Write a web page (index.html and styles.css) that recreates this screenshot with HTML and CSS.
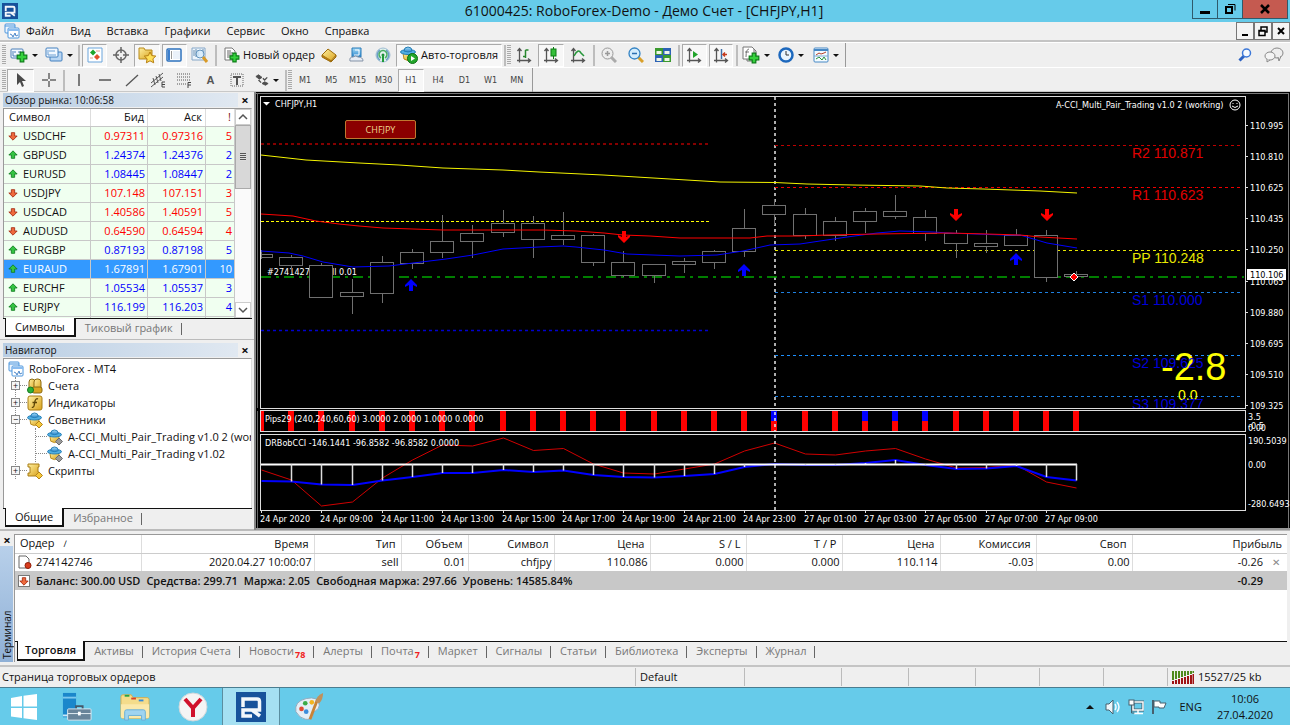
FILE: index.html
```html
<!DOCTYPE html>
<html lang="ru">
<head>
<meta charset="utf-8">
<title>61000425: RoboForex-Demo - Демо Счет - [CHFJPY,H1]</title>
<link rel="stylesheet" href="styles.css">
</head>
<body>
<svg class="defs" aria-hidden="true">
  <defs>
    <linearGradient id="gold" x1="0" y1="0" x2="1" y2="1"><stop offset="0" stop-color="#fff0a0"/><stop offset="1" stop-color="#d9a21c"/></linearGradient>
    <linearGradient id="sky" x1="0" y1="0" x2="0" y2="1"><stop offset="0" stop-color="#a5dcf8"/><stop offset="1" stop-color="#2a86cc"/></linearGradient>
  </defs>
  <symbol id="logo" viewBox="0 0 30 30"><rect width="30" height="30" fill="#17529b"/><path d="M7 15V7h14q2.500 0 2.500 2.500V18H7v6h9M16 18l8 6" fill="none" stroke="#f3f7fb" stroke-width="3.500"/></symbol>
  <symbol id="charts" viewBox="0 0 16 16"><rect x="1" y="1" width="10" height="9" rx="1" fill="#eef6ff" stroke="#4b95dc"/><path d="M1 3h10" stroke="#4b95dc"/><rect x="4" y="5" width="11" height="10" rx="1" fill="#fff" stroke="#4b95dc"/><path d="M4 7h11" stroke="#8abcf0" stroke-width="2"/><path d="M6 11l2 1 1 2 2-4 1 3 2-1" fill="none" stroke="#4b86c8"/></symbol>
  <symbol id="plus" viewBox="0 0 10 10"><path d="M3.500 1h3v2.500h2.500v3h-2.500v2.500h-3v-2.500h-2.500v-3h2.500z" fill="#35d23c" stroke="#0c7d17"/></symbol>
  <symbol id="newchart" viewBox="0 0 18 16"><rect x="1" y="2" width="12" height="9" rx="1" fill="#f2f8ff" stroke="#4a7fb8"/><path d="M3 4v5h8M4 5h2M8 5h3" fill="none" stroke="#4a7fb8"/><use href="#plus" x="6" y="4" width="12" height="12"/></symbol>
  <symbol id="windows" viewBox="0 0 18 16"><rect x="5" y="5" width="12" height="9" rx="1" fill="#b9d6f3" stroke="#4280bf"/><rect x="1" y="1" width="12" height="9" rx="1" fill="#f2f8ff" stroke="#4280bf"/><path d="M3 3v5h8M4 4h6" fill="none" stroke="#6a9fd4"/></symbol>
  <symbol id="watch" viewBox="0 0 16 16"><path d="M1 1h14v14H1z" fill="#fff" stroke="#6aa5dc"/><path d="M3 5.500l3-3 3 3-3 3z" fill="#1ea52c"/><path d="M7 10l3-3 3 3-3 3z" fill="#e2502b"/><path d="M9 4h4M3 11h3" stroke="#e3a08c"/></symbol>
  <symbol id="target" viewBox="0 0 16 16"><circle cx="8" cy="8" r="5" fill="none" stroke="#666" stroke-width="1.500"/><path d="M8 0v6M8 10v6M0 8h6M10 8h6" stroke="#666" stroke-width="1.500"/></symbol>
  <symbol id="folderstar" viewBox="0 0 18 18"><path d="M1 2h5l1 2h7v9H1z" fill="url(#gold)" stroke="#b88a1d"/><path d="M12 6l1.800 3.600 4 .5-2.900 2.700.8 4-3.700-2-3.600 2 .7-4-2.800-2.700 4-.5z" fill="#ffe05a" stroke="#b57d10"/></symbol>
  <symbol id="panel" viewBox="0 0 16 16"><rect x="1" y="2" width="14" height="12" rx="1" fill="#fff" stroke="#2d71bd" stroke-width="1.500"/><path d="M3 3v10" stroke="#3c7fce" stroke-width="2"/><path d="M5 5h1M5 7h1M5 9h1M5 11h1" stroke="#333"/><path d="M7 5h7M7 7h7M7 9h7M7 11h7" stroke="#d6e4f5"/></symbol>
  <symbol id="tester" viewBox="0 0 18 18"><path d="M1 2h13v12H1z" fill="#edf5fc" stroke="#86a7c8"/><path d="M3 4v6M5 3v8M7 5v5M12 3v5" stroke="#6b8fb0"/><circle cx="9" cy="8" r="4" fill="#d4ebfb" fill-opacity=".8" stroke="#6293bd"/><path d="M12 11l4 5" stroke="#d99b28" stroke-width="3"/></symbol>
  <symbol id="order" viewBox="0 0 16 16"><path d="M1 1h7l3 3v9H1z" fill="#fff" stroke="#777"/><path d="M3 4h4M3 6h6M3 8h5M3 10h3" stroke="#666"/><use href="#plus" x="5" y="5" width="11" height="11"/></symbol>
  <symbol id="gold-bar" viewBox="0 0 16 16"><path d="M1 8l6-6 8 6-5 6z" fill="url(#gold)" stroke="#9d6d0c"/><path d="M1 8v2l9 5v-2M10 15l5-5V8" fill="#b67d12" stroke="#9d6d0c"/></symbol>
  <symbol id="hat" viewBox="0 0 16 16"><path d="M4 1h9v9H4z" fill="url(#sky)" stroke="#287bb8"/><path d="M7 3h4v5H6" fill="none" stroke="#fff"/><path d="M2 14q-1-4 3-4 3-2 5 0 5 0 5 4z" fill="#e6ecf4" stroke="#8593a7"/></symbol>
  <symbol id="signal" viewBox="0 0 16 16"><circle cx="8" cy="8" r="7" fill="#e3f1ee" stroke="#a0bdd3"/><path d="M5 13a6 6 0 0 1 0-10M11 3a6 6 0 0 1 0 10" fill="none" stroke="#6b9fc5" stroke-width="1.500"/><path d="M6 11a4 4 0 1 1 4 0" fill="none" stroke="#49ae63" stroke-width="1.500"/><circle cx="8" cy="8" r="1.500" fill="#1f8a39"/><path d="M8 8v7" stroke="#1f9a39" stroke-width="2"/></symbol>
  <symbol id="advisor" viewBox="0 0 16 16"><path d="M3 7h10l-1 6q-4 3-8 0z" fill="url(#gold)" stroke="#b88a1d"/><ellipse cx="8" cy="6" rx="7.500" ry="2.500" fill="#50aee2" stroke="#247db4"/><path d="M4 5q0-4 4-4t4 4q-4 2-8 0" fill="url(#sky)" stroke="#247db4"/></symbol>
  <symbol id="advisor-play" viewBox="0 0 18 18"><use href="#advisor" width="16" height="16"/><circle cx="12.500" cy="12.500" r="5" fill="#22a62b" stroke="#0a7012"/><path d="M11 10l4 2.500-4 2.500z" fill="#fff"/></symbol>
  <symbol id="advisor-gold" viewBox="0 0 16 16"><use href="#advisor" width="15" height="15"/><path d="M12 9l3.500 3.500-3.500 3.500-3.500-3.500z" fill="#f5c83a" stroke="#b3831a"/></symbol>
  <symbol id="advisor-gray" viewBox="0 0 16 16"><use href="#advisor" width="15" height="15"/><path d="M12 9l3.500 3.500-3.500 3.500-3.500-3.500z" fill="#9a9a9a" stroke="#6c6c6c"/></symbol>
  <symbol id="axes" viewBox="0 0 16 16"><path d="M3.500 2v11.500H14M1 13.500h2.500v2M1.500 4l2-2.500 2 2.500M12 11.500l2.500 2-2.500 2" fill="none" stroke="#555" stroke-width="1.300"/></symbol>
  <symbol id="bars" viewBox="0 0 16 16"><use href="#axes"/><path d="M9.500 3v8M9.500 3h3M7 9.500h2.500" stroke="#27862d" stroke-width="1.500"/></symbol>
  <symbol id="candles" viewBox="0 0 16 16"><use href="#axes"/><path d="M10.500 0v12" stroke="#0b7b12"/><rect x="8" y="2" width="5" height="7" fill="#34bf39" stroke="#0b7b12"/></symbol>
  <symbol id="linechart" viewBox="0 0 16 16"><use href="#axes"/><path d="M4 9q4-8 7-3l3 3" fill="none" stroke="#26963a" stroke-width="1.500"/></symbol>
  <symbol id="zoomin" viewBox="0 0 16 16"><path d="M10 10l5 5" stroke="#aaa" stroke-width="3"/><circle cx="6.500" cy="6.500" r="5.500" fill="#eee" stroke="#999"/><path d="M4 6.500h5M6.500 4v5" stroke="#999" stroke-width="1.500"/></symbol>
  <symbol id="zoomout" viewBox="0 0 16 16"><path d="M10 10l5 5" stroke="#d9a02a" stroke-width="3"/><circle cx="6.500" cy="6.500" r="5.500" fill="#d3ecfc" stroke="#3484c4" stroke-width="1.300"/><path d="M4 6.500h5" stroke="#2a6fb0" stroke-width="1.500"/></symbol>
  <symbol id="tiles" viewBox="0 0 16 16"><path d="M0 1h8v7H0zM8 8h8v7H8z" fill="#3a9a2e"/><path d="M8 1h8v7H8zM0 8h8v7H0z" fill="#2c62b5"/><path d="M1.500 4h5v3h-5zM9.500 4h5v3h-5zM1.500 11h5v3h-5zM9.500 11h5v3h-5z" fill="#eef6e8"/></symbol>
  <symbol id="scroll" viewBox="0 0 16 16"><use href="#axes"/><path d="M7 4l5 3.500-5 3.500z" fill="#1fa32a"/></symbol>
  <symbol id="shift" viewBox="0 0 16 16"><use href="#axes"/><path d="M8.500 2v10" stroke="#3d6fa8" stroke-width="1.500"/><path d="M14 7.500h-4M12 5.500l-2 2 2 2" fill="none" stroke="#c53a1d" stroke-width="1.500"/></symbol>
  <symbol id="indicators" viewBox="0 0 18 18"><path d="M5 3h7l2 2v10H5z" fill="#eee" stroke="#777"/><path d="M1 1h9l2 2v10H1z" fill="#fff" stroke="#777"/><path d="M7 3q-3 0-3 8M3 6h4" fill="none" stroke="#777"/><use href="#plus" x="6" y="6" width="12" height="12"/></symbol>
  <symbol id="clock" viewBox="0 0 16 16"><circle cx="8" cy="8" r="6.500" fill="#e9f5ff" stroke="#1d68bd" stroke-width="2.500"/><path d="M8 4v4h3" fill="none" stroke="#333"/></symbol>
  <symbol id="template" viewBox="0 0 16 16"><rect x="1" y="1" width="14" height="14" rx="1" fill="#f4fbff" stroke="#4688c5"/><path d="M1 3h14" stroke="#4688c5" stroke-width="2"/><path d="M3 8l3-2 2 1 3-1 2-1" fill="none" stroke="#b3402b"/><path d="M3 12l3-2 3 3 2-3 2 3" fill="none" stroke="#299238"/><path d="M1 9h14" stroke="#7ca9d1"/></symbol>
  <symbol id="search" viewBox="0 0 14 14"><path d="M1.500 12.500l5-5" stroke="#2c62c2" stroke-width="3"/><circle cx="8.500" cy="5" r="4" fill="#f6faff" stroke="#3c78d8" stroke-width="1.500"/></symbol>
  <symbol id="chat" viewBox="0 0 20 16"><ellipse cx="13" cy="6" rx="6" ry="5" fill="#eee" stroke="#888"/><path d="M14 10l1 4 2-5" fill="#eee" stroke="#888"/><ellipse cx="6" cy="9" rx="5" ry="4" fill="#f4f4f4" stroke="#888"/><path d="M3 12l0 3 3-2" fill="#eee" stroke="#888"/></symbol>
  <symbol id="cursor" viewBox="0 0 16 16"><path d="M4 1v12l3-3 2 5 2-1-2-5h4z" fill="#4b4b4b"/></symbol>
  <symbol id="cross" viewBox="0 0 16 16"><path d="M8 1v6M8 9v6M1 8h6M9 8h6" stroke="#666" stroke-width="1.500"/></symbol>
  <symbol id="vline" viewBox="0 0 16 16"><path d="M8 2v12" stroke="#555" stroke-width="1.500"/></symbol>
  <symbol id="hline" viewBox="0 0 16 16"><path d="M2 8h12" stroke="#555" stroke-width="1.500"/></symbol>
  <symbol id="trend" viewBox="0 0 16 16"><path d="M2 14L14 3" stroke="#555" stroke-width="1.300"/></symbol>
  <symbol id="channel" viewBox="0 0 16 16"><path d="M1 11L13 1M1 15L13 5M3 6l2 7M6 4l2 7M9 2l2 7" fill="none" stroke="#555"/><path d="M15 10h-3v5h3M12 12.500h3" fill="none" stroke="#444"/></symbol>
  <symbol id="fibo" viewBox="0 0 16 16"><path d="M1 2h14M1 5h14M1 8h14M1 12h9" stroke="#555" stroke-dasharray="1 1"/><path d="M15 10.500h-3V16M12 13h3" fill="none" stroke="#444"/></symbol>
  <symbol id="textlabel" viewBox="0 0 16 16"><rect x="2" y="2" width="12" height="12" fill="none" stroke="#666" stroke-dasharray="1 1"/><path d="M4 5h8M8 5v8" stroke="#555" stroke-width="2"/></symbol>
  <symbol id="arrows" viewBox="0 0 16 16"><path d="M1 4l3-2 4 3-3 2zM8 12l3-2 4 2-3 2z" fill="#4d4d4d" stroke="#4d4d4d"/><path d="M4 8l3 3M9 6l2 2 3-3" fill="none" stroke="#4d4d4d" stroke-width="1.500"/></symbol>
  <symbol id="up" viewBox="0 0 12 12"><path d="M6 1l5 5H8v4H4V6H1z" fill="#35c443" stroke="#0f7a1e"/></symbol>
  <symbol id="down" viewBox="0 0 12 12"><path d="M6 11l5-5H8V2H4v4H1z" fill="#ee6a3c" stroke="#a3280e"/></symbol>
  <symbol id="users" viewBox="0 0 16 16"><rect x="2" y="1" width="6" height="12" rx="3" fill="url(#gold)" stroke="#8d6b12"/><rect x="7" y="1" width="7" height="12" rx="3" fill="url(#gold)" stroke="#8d6b12"/><rect x="5" y="9" width="10" height="6" rx="2" fill="#d8a420" stroke="#8d6b12"/><circle cx="3.500" cy="12" r="3" fill="#2db23a" stroke="#167a20"/></symbol>
  <symbol id="func" viewBox="0 0 16 16"><rect x="1" y="1" width="14" height="14" rx="2" fill="url(#gold)" stroke="#a87c14"/><path d="M11 4q-2-1-3 2l-1 5q-1 2-2 1M5.500 7.500h4.500" fill="none" stroke="#5d4506" stroke-width="1.300"/></symbol>
  <symbol id="script" viewBox="0 0 16 16"><path d="M1 1h11v3h-1v5h1v4H1v-3h2V4H1z" fill="url(#gold)" stroke="#a87c14"/><path d="M12 9l3.500 3.500-3.500 3.500-3.500-3.500z" fill="#f5c83a" stroke="#b3831a"/></symbol>
  <symbol id="page" viewBox="0 0 14 14"><path d="M1 1h7l3 3v9H1z" fill="#fff" stroke="#666"/><circle cx="10" cy="10.500" r="3" fill="#d83c1c" stroke="#8f1d08"/></symbol>
  <symbol id="traffic" viewBox="0 0 22 13"><path d="M1 0v9M4 0v8M7 0v7M10 0v6M13 0v5M16 0v4M19 0v3M21.500 0v2" stroke="#4f8a1c" stroke-width="2"/><path d="M1 10v3M4 9v4M7 8v5M10 7v6M13 6v7M16 5v8M19 4v9M21.500 3v10" stroke="#a01414" stroke-width="2"/></symbol>
  <symbol id="winlogo" viewBox="0 0 26 26"><path d="M0 4l11-2v10.500H0zM12.500 1.700L26 0v12.500H12.500zM0 14h11v10L0 22.500zM12.500 14H26v12l-13.500-1.800z" fill="#fff"/></symbol>
  <symbol id="server" viewBox="0 0 32 30"><path d="M1 0h14v26H1z" fill="#1b87cb"/><path d="M1 5h14" stroke="#7cc8ee" stroke-width="2"/><path d="M1 24h14" stroke="#c5e8fa" stroke-width="2"/><path d="M15 17v-3h7v3" fill="none" stroke="#45596b" stroke-width="2"/><rect x="6" y="17" width="25" height="12" rx="1" fill="#68849a" stroke="#dceaf2"/><path d="M6 22h25" stroke="#e8f2f8"/><path d="M17 20h3v4h-3z" fill="#fff"/></symbol>
  <symbol id="explorer" viewBox="0 0 32 30"><path d="M1 4q0-2 2-2h9l2 3h15q2 0 2 2v18q0 2-2 2H3q-2 0-2-2z" fill="#f4dc8b" stroke="#d2ad50"/><path d="M5 3h5" stroke="#26a346" stroke-width="2"/><path d="M12 6h5" stroke="#d9402a" stroke-width="2"/><path d="M20 8h5" stroke="#3489d8" stroke-width="2"/><path d="M1 12h30v13q0 2-2 2H3q-2 0-2-2z" fill="#fbe9ab"/><path d="M5 29V20q0-2 2-2h18q2 0 2 2v9h-4v-5H9v5z" fill="#9fd4f0" stroke="#66aed6"/></symbol>
  <symbol id="yandex" viewBox="0 0 30 30"><circle cx="15" cy="15" r="14" fill="#f4f4f4" stroke="#d0d7da"/><path d="M7 7l8 9 8-9M15 15v10" fill="none" stroke="#d0112b" stroke-width="4"/></symbol>
  <symbol id="paint" viewBox="0 0 32 30"><path d="M2 20Q0 9 13 6t14 7q0 4-4 6t-3 6q-2 4-8 3T2 20z" fill="#e4eef6" stroke="#8fa8bb"/><circle cx="8" cy="17" r="2.500" fill="#e24a33"/><circle cx="12" cy="11" r="2.500" fill="#3cab47"/><circle cx="19" cy="10" r="2.500" fill="#f3b51f"/><circle cx="13" cy="20" r="2.500" fill="#3b8ddb"/><path d="M17 28L25 7" stroke="#c88336" stroke-width="3"/><path d="M23 9q1-6 8-9 0 7-4 11z" fill="#c0915c"/></symbol>
  <symbol id="speaker" viewBox="0 0 16 16"><path d="M1 5h3l4-4v14l-4-4H1z" fill="#eef6fa" stroke="#47606e"/><path d="M10 5q2 3 0 6M12 3q4 5 0 10" fill="none" stroke="#f4fbff" stroke-width="1.500"/></symbol>
  <symbol id="network" viewBox="0 0 16 16"><rect x="5" y="3" width="10" height="8" fill="#66cbea" stroke="#47606e" stroke-width="3"/><rect x="5" y="3" width="10" height="8" fill="none" stroke="#fff" stroke-width="1.500"/><path d="M10 11v3M6 14.500h9" stroke="#fff" stroke-width="1.500"/><rect x="1" y="1" width="5" height="5" fill="#fff" stroke="#47606e"/><path d="M3.500 6v8h3" fill="none" stroke="#47606e"/></symbol>
  <symbol id="flag" viewBox="0 0 16 16"><path d="M2 1v14" stroke="#47606e" stroke-width="2"/><path d="M3 2h6v2h6l-2 5H8V8H3z" fill="#fff" stroke="#47606e"/></symbol>
</svg>

<header class="titlebar">
  <svg class="i16"><use href="#logo"/></svg>
  <h1>61000425: RoboForex-Demo - Демо Счет - [CHFJPY,H1]</h1>
  <div class="winbtns">
    <button aria-label="Свернуть"><svg viewBox="0 0 12 12"><path d="M1 8h10v3H1z"/></svg></button>
    <button aria-label="Восстановить"><svg viewBox="0 0 12 12"><path d="M4 1.500h7v6" fill="none" stroke="#000"/><path d="M2 4h6v6H2z" fill="none" stroke="#000" stroke-width="2"/></svg></button>
    <button class="close" aria-label="Закрыть"><svg viewBox="0 0 12 12"><path d="M2 2l8 8M10 2l-8 8" stroke="#000" stroke-width="2.500"/></svg></button>
  </div>
</header>

<nav class="menubar">
  <svg class="i16"><use href="#charts"/></svg>
  <button>Файл</button><button>Вид</button><button>Вставка</button><button>Графики</button><button>Сервис</button><button>Окно</button><button>Справка</button>
  <div class="mdibtns">
    <button aria-label="Свернуть окно"><svg viewBox="0 0 12 12"><path d="M3 9h6v2H3z"/></svg></button>
    <button aria-label="Восстановить окно"><svg viewBox="0 0 12 12"><path d="M4 5V2h6v5H8M2 5.500h6v5H2zM2 6h6" fill="none" stroke="#000" stroke-width="1.500"/></svg></button>
    <button aria-label="Закрыть окно"><svg viewBox="0 0 12 12"><path d="M3 3l6 6M9 3l-6 6" stroke="#000" stroke-width="2"/></svg></button>
  </div>
</nav>

<section class="toolbars">
  <div class="toolbar">
    <i class="grip"></i>
    <div class="group g68"><button class="drop" aria-label="Новый график"><svg class="i18"><use href="#newchart"/></svg></button><button class="drop" aria-label="Профили"><svg class="i18"><use href="#windows"/></svg></button></div>
    <i class="sep"></i>
    <div class="group g132"><button class="on" aria-label="Обзор рынка"><svg class="i16"><use href="#watch"/></svg></button><button aria-label="Окно данных"><svg class="i16"><use href="#target"/></svg></button><button class="on" aria-label="Навигатор"><svg class="i18"><use href="#folderstar"/></svg></button><button class="on" aria-label="Терминал"><svg class="i16"><use href="#panel"/></svg></button><button aria-label="Тестер стратегий"><svg class="i18"><use href="#tester"/></svg></button></div>
    <i class="sep"></i>
    <button class="wide order"><svg class="i16"><use href="#order"/></svg>Новый ордер</button>
    <div class="group g80"><button aria-label="MetaEditor"><svg class="i16"><use href="#gold-bar"/></svg></button><button aria-label="Маркет"><svg class="i16"><use href="#hat"/></svg></button><button aria-label="Сигналы"><svg class="i16"><use href="#signal"/></svg></button></div>
    <button class="wide auto on"><svg class="i18"><use href="#advisor-play"/></svg>Авто-торговля</button>
    <i class="sep"></i><i class="grip"></i>
    <div class="group g80"><button aria-label="Бары"><svg class="i16"><use href="#bars"/></svg></button><button class="on" aria-label="Свечи"><svg class="i16"><use href="#candles"/></svg></button><button aria-label="Линия"><svg class="i16"><use href="#linechart"/></svg></button></div>
    <i class="sep"></i>
    <div class="group g80"><button aria-label="Увеличить"><svg class="i16"><use href="#zoomin"/></svg></button><button aria-label="Уменьшить"><svg class="i16"><use href="#zoomout"/></svg></button><button aria-label="Окна мозаикой"><svg class="i16"><use href="#tiles"/></svg></button></div>
    <i class="sep"></i>
    <div class="group g52"><button class="on" aria-label="Автопрокрутка"><svg class="i16"><use href="#scroll"/></svg></button><button class="on" aria-label="Сдвиг графика"><svg class="i16"><use href="#shift"/></svg></button></div>
    <i class="sep"></i>
    <div class="group g104"><button class="drop" aria-label="Индикаторы"><svg class="i18"><use href="#indicators"/></svg></button><button class="drop" aria-label="Периоды"><svg class="i16"><use href="#clock"/></svg></button><button class="drop" aria-label="Шаблоны"><svg class="i16"><use href="#template"/></svg></button></div>
    <i class="edge"></i>
    <div class="right"><button aria-label="Поиск"><svg class="i14"><use href="#search"/></svg></button><button aria-label="Чат"><svg class="i20"><use href="#chat"/></svg></button></div>
  </div>
  <div class="toolbar second">
    <i class="grip"></i>
    <div class="group g54"><button class="on" aria-label="Курсор"><svg class="i16"><use href="#cursor"/></svg></button><button aria-label="Перекрестие"><svg class="i16"><use href="#cross"/></svg></button></div>
    <i class="sep"></i>
    <div class="group g184"><button aria-label="Вертикальная линия"><svg class="i16"><use href="#vline"/></svg></button><button aria-label="Горизонтальная линия"><svg class="i16"><use href="#hline"/></svg></button><button aria-label="Трендовая линия"><svg class="i16"><use href="#trend"/></svg></button><button aria-label="Канал"><svg class="i16"><use href="#channel"/></svg></button><button aria-label="Фибоначчи"><svg class="i16"><use href="#fibo"/></svg></button><button class="letter">A</button><button aria-label="Метка"><svg class="i16"><use href="#textlabel"/></svg></button></div>
    <div class="group g34"><button class="drop" aria-label="Стрелки"><svg class="i14"><use href="#arrows"/></svg></button></div>
    <i class="sep"></i><i class="grip"></i>
    <div class="group g238 tf"><button>M1</button><button>M5</button><button>M15</button><button>M30</button><button class="on">H1</button><button>H4</button><button>D1</button><button>W1</button><button>MN</button></div>
    <i class="edge"></i>
  </div>
</section>

<main class="work">
  <aside class="side">
    <section class="dock watch">
      <header class="dockhead"><h2>Обзор рынка: 10:06:58</h2><button aria-label="Закрыть">×</button></header>
      <div class="dockbody">
        <table class="quotes">
          <colgroup><col><col class="cbid"><col class="cask"><col class="cspr"></colgroup>
          <thead><tr><th>Символ</th><th>Бид</th><th>Аск</th><th>!</th></tr></thead>
          <tbody>
            <tr class="dn"><td><svg><use href="#down"/></svg>USDCHF</td><td>0.97311</td><td>0.97316</td><td>5</td></tr>
            <tr><td><svg><use href="#up"/></svg>GBPUSD</td><td>1.24374</td><td>1.24376</td><td>2</td></tr>
            <tr><td><svg><use href="#up"/></svg>EURUSD</td><td>1.08445</td><td>1.08447</td><td>2</td></tr>
            <tr class="dn"><td><svg><use href="#down"/></svg>USDJPY</td><td>107.148</td><td>107.151</td><td>3</td></tr>
            <tr class="dn"><td><svg><use href="#down"/></svg>USDCAD</td><td>1.40586</td><td>1.40591</td><td>5</td></tr>
            <tr class="dn"><td><svg><use href="#down"/></svg>AUDUSD</td><td>0.64590</td><td>0.64594</td><td>4</td></tr>
            <tr><td><svg><use href="#up"/></svg>EURGBP</td><td>0.87193</td><td>0.87198</td><td>5</td></tr>
            <tr class="sel"><td><svg><use href="#up"/></svg>EURAUD</td><td>1.67891</td><td>1.67901</td><td>10</td></tr>
            <tr><td><svg><use href="#up"/></svg>EURCHF</td><td>1.05534</td><td>1.05537</td><td>3</td></tr>
            <tr><td><svg><use href="#up"/></svg>EURJPY</td><td>116.199</td><td>116.203</td><td>4</td></tr>
            <tr><td></td><td></td><td></td><td></td></tr>
          </tbody>
        </table>
        <div class="scrollbar"><button aria-label="Вверх"><svg viewBox="0 0 10 10"><path d="M1 7l4-4 4 4" fill="none" stroke="#555" stroke-width="1.500"/></svg></button><span class="thumb"><i></i></span><button class="last" aria-label="Вниз"><svg viewBox="0 0 10 10"><path d="M1 3l4 4 4-4" fill="none" stroke="#555" stroke-width="1.500"/></svg></button></div>
      </div>
      <div class="tabs"><button class="active">Символы</button><button>Тиковый график</button></div>
    </section>
    <section class="dock navi">
      <header class="dockhead"><h2>Навигатор</h2><button aria-label="Закрыть">×</button></header>
      <div class="dockbody">
        <div class="tree">
          <div class="node root"><svg class="i16"><use href="#charts"/></svg>RoboForex - MT4</div>
          <ul class="level">
            <li class="node"><button aria-label="Развернуть">+</button><i></i><svg class="i16"><use href="#users"/></svg>Счета</li>
            <li class="node"><button aria-label="Развернуть">+</button><i></i><svg class="i16"><use href="#func"/></svg>Индикаторы</li>
            <li class="node"><button aria-label="Свернуть">−</button><i></i><svg class="i16"><use href="#advisor-gold"/></svg>Советники</li>
            <li><ul class="sub">
              <li class="node"><i></i><svg class="i16"><use href="#advisor-gray"/></svg>A-CCI_Multi_Pair_Trading v1.0 2 (working)</li>
              <li class="node"><i></i><svg class="i16"><use href="#advisor-gray"/></svg>A-CCI_Multi_Pair_Trading v1.02</li>
            </ul></li>
            <li class="node"><button aria-label="Развернуть">+</button><i></i><svg class="i16"><use href="#script"/></svg>Скрипты</li>
          </ul>
        </div>
      </div>
      <div class="tabs"><button class="active">Общие</button><button>Избранное</button></div>
    </section>
  </aside>
  <section class="chart">
    <svg id="chart" viewBox="256 92 1034 438" preserveAspectRatio="xMinYMin meet" role="img" aria-label="CHFJPY,H1"></svg>
    <button class="pair">CHFJPY</button>
  </section>
</main>

<section class="terminal">
  <div class="strip"><button aria-label="Закрыть терминал">×</button><span>Терминал</span></div>
  <div class="termbody">
    <table class="orders">
      <colgroup><col class="w126"><col class="w173"><col class="w87"><col class="w67"><col class="w86"><col class="w96"><col class="w96"><col class="w96"><col class="w98"><col class="w96"><col class="w96"><col></colgroup>
      <thead><tr><th>Ордер <small>∕</small></th><th>Время</th><th>Тип</th><th>Объем</th><th>Символ</th><th>Цена</th><th>S / L</th><th>T / P</th><th>Цена</th><th>Комиссия</th><th>Своп</th><th>Прибыль</th></tr></thead>
      <tbody>
        <tr><td><svg class="i14"><use href="#page"/></svg>274142746</td><td>2020.04.27 10:00:07</td><td>sell</td><td>0.01</td><td>chfjpy</td><td>110.086</td><td>0.000</td><td>0.000</td><td>110.114</td><td>-0.03</td><td>0.00</td><td>-0.26<button aria-label="Закрыть ордер">✕</button></td></tr>
        <tr class="sum"><td colspan="11"><span class="box"><svg><use href="#down"/></svg></span><b>Баланс: 300.00 USD</b><b>Средства: 299.71</b><b>Маржа: 2.05</b><b>Свободная маржа: 297.66</b><b>Уровень: 14585.84%</b></td><td>-0.29</td></tr>
      </tbody>
    </table>
    <div class="tabs"><button class="active">Торговля</button><button>Активы</button><button>История Счета</button><button>Новости<sub>78</sub></button><button>Алерты</button><button>Почта<sub>7</sub></button><button>Маркет</button><button>Сигналы</button><button>Статьи</button><button>Библиотека</button><button>Эксперты</button><button>Журнал</button></div>
  </div>
</section>

<footer class="status"><span class="grow">Страница торговых ордеров</span><span class="s109">Default</span><span class="s96"></span><span class="s67"></span><span class="s67"></span><span class="s64"></span><span class="s64"></span><span class="s64"></span><span class="net"><svg><use href="#traffic"/></svg>15527/25 kb</span></footer>

<nav class="taskbar">
  <button class="start" aria-label="Пуск"><svg class="i26"><use href="#winlogo"/></svg></button>
  <button aria-label="Диспетчер серверов"><svg class="i30"><use href="#server"/></svg></button>
  <button aria-label="Проводник"><svg class="i30"><use href="#explorer"/></svg></button>
  <button aria-label="Яндекс"><svg class="i30"><use href="#yandex"/></svg></button>
  <button class="running" aria-label="RoboForex"><svg class="i30"><use href="#logo"/></svg></button>
  <button aria-label="Paint"><svg class="i30"><use href="#paint"/></svg></button>
  <div class="tray"><button class="more" aria-label="Скрытые значки"></button><svg class="i16"><use href="#speaker"/></svg><svg class="i16"><use href="#network"/></svg><svg class="i16"><use href="#flag"/></svg><button class="lang">ENG</button><time>10:06<br>27.04.2020</time></div>
</nav>
<script src="chart.js"></script>
</body>
</html>
```

FILE: styles.css
```css
* { box-sizing: border-box; }
body { margin: 0; min-height: 100vh; display: flex; flex-direction: column; overflow: hidden; background: #efefef; color: #111; font: 11px/16px "Open Sans", "Noto Sans", sans-serif; }
button { margin: 0; padding: 0; border: 0; background: none; color: inherit; font: inherit; white-space: nowrap; }
h1, h2, ul { margin: 0; padding: 0; font: inherit; list-style: none; }
svg { display: block; flex: none; }
.defs { position: absolute; width: 0; height: 0; }
.i14 { width: 14px; height: 14px; }
.i16 { width: 16px; height: 16px; }
.i18 { width: 18px; height: 18px; }
.i20 { width: 20px; height: 16px; }
.i26 { width: 26px; height: 26px; }
.i30 { width: 30px; height: 30px; }

.titlebar { flex: none; height: 22px; display: flex; align-items: center; background: #66cbea; padding-left: 2px; }
.titlebar h1 { flex: 1; text-align: center; font-size: 14px; line-height: 20px; padding-left: 78px; }
.winbtns { display: flex; align-self: flex-start; height: 19px; margin-right: 2px; border: 1px solid #2f5a6b; border-top: 0; }
.winbtns button { width: 25px; display: grid; place-items: center; border-right: 1px solid #2f5a6b; }
.winbtns .close { width: 44px; border: 0; background: #c55a50; }
.winbtns svg, .mdibtns svg { width: 12px; height: 12px; }

.menubar { flex: none; height: 20px; display: flex; align-items: center; gap: 16px; padding-left: 4px; border-bottom: 2px solid #c4c4c4; background: #f0f0f0; }
.menubar > .i16 { margin-right: -10px; }
.mdibtns { margin-left: auto; display: flex; height: 18px; }
.mdibtns button { width: 18px; display: grid; place-items: center; border: 1px solid #777; background: #f4f4f4; }

.toolbars { flex: none; height: 50px; border-bottom: 1px solid #c8c8c8; }
.toolbar { height: 25px; display: flex; align-items: center; padding-left: 2px; border-top: 1px solid #fff; }
.grip { flex: none; width: 4px; height: 20px; background: repeating-linear-gradient(#aaa 0 1px, #f0f0f0 1px 2px); }
.sep, .edge { flex: none; width: 2px; height: 21px; margin: 0 1px 0 2px; background: #bdbdbd; }
.second .sep { margin-left: 1px; }
.edge { height: 24px; width: 1px; background: #999; }
.group { flex: none; display: flex; gap: 2px; height: 23px; padding: 0 1px; }
.group button { flex: 1; display: grid; place-items: center; }
.group .drop { display: flex; align-items: center; justify-content: center; gap: 4px; }
.drop::after { content: ""; border: 3px solid transparent; border-top: 3px solid #111; border-bottom: 0; }
.on { border: 1px solid; border-color: #aaa #fff #fff #aaa; background: #f7f7f7; }
.g34 { width: 34px; } .g52 { width: 53px; } .g54 { width: 56px; } .g68 { width: 70px; } .g80 { width: 80px; }
.g104 { width: 104px; } .g132 { width: 132px; } .g184 { width: 184px; } .g238 { width: 238px; }
.wide { flex: none; height: 23px; display: flex; align-items: center; gap: 3px; }
.order { width: 98px; padding-left: 6px; }
.auto { width: 106px; padding-left: 3px; }
.right { margin-left: auto; display: flex; align-items: center; gap: 12px; padding-right: 6px; }
.letter { font: bold 11px/14px "Liberation Sans", sans-serif; color: #555; }
.tf { color: #444; font: 9px/12px "DejaVu Sans Condensed", "DejaVu Sans", sans-serif; }

.work { flex: 1; min-height: 0; display: flex; }
.side { flex: none; width: 256px; display: flex; flex-direction: column; border-right: 2px solid #888; }
.dock { display: flex; flex-direction: column; min-height: 0; padding: 1px 2px 1px 3px; border-bottom: 1px solid #bbb; }
.watch { flex: 250 0 0; }
.navi { flex: 188 0 0; padding-top: 3px; }
.dockhead { flex: none; height: 14px; display: flex; align-items: center; padding-left: 2px; background: linear-gradient(90deg, #b9cee4, #e3eaf2); font-size: 10px; line-height: 14px; }
.dockhead button { margin-left: auto; width: 14px; background: #f0f0f0; font-weight: bold; font-size: 13px; line-height: 14px; }
.dockbody { flex: 1; min-height: 0; display: flex; align-items: flex-start; overflow: hidden; margin-top: 1px; border: 1px solid #999; border-bottom: 0; border-right-color: #ddd; background: #fff; }
.quotes { flex: 1; border-collapse: collapse; table-layout: fixed; width: 0; }
.cbid { width: 57px; } .cask { width: 58px; } .cspr { width: 29px; }
.quotes th { height: 17px; padding: 0 3px 0 5px; font-weight: 400; line-height: 16px; text-align: right; border-right: 1px solid #ddd; border-bottom: 1px solid #c8c8c8; }
.quotes th:first-child, .quotes td:first-child { text-align: left; }
.quotes th:last-child { color: #802020; }
.quotes td { height: 19px; padding: 0 2px; line-height: 18px; text-align: right; color: #00f; background: #f0fff0; border: 1px solid #c8c8c8; border-top: 0; }
.quotes td:first-child { color: #111; border-left: 0; }
.quotes td svg { float: left; width: 10px; height: 10px; margin: 4px 5px 0 2px; }
.quotes .dn td:nth-child(n+2) { color: #f00; }
.quotes .sel td, .quotes .sel td:first-child { background: #3399ff; color: #fff; }
.scrollbar { width: 16px; align-self: stretch; display: flex; flex-direction: column; background: #fafafa; }
.scrollbar button { height: 16px; display: grid; place-items: center; border: 1px solid #ccc; background: #fff; }
.scrollbar svg { width: 10px; height: 10px; }
.scrollbar .last { margin-top: auto; }
.thumb { height: 64px; display: grid; place-items: center; background: #d8d8d8; border: 1px solid #aaa; }
.thumb i { width: 6px; height: 8px; background: repeating-linear-gradient(#555 0 1px, #ddd 1px 2px); }

.tabs { flex: none; height: 20px; display: flex; padding-left: 2px; color: #777; border-top: 1px solid #111; }
.tabs button { display: flex; align-items: center; padding: 0 9px; height: 18px; line-height: 16px; position: relative; }
.tabs button + button::after { content: ""; position: absolute; right: 0; top: 4px; height: 12px; width: 1px; background: #666; }
.tabs .active { color: #111; background: #fff; border: solid #111; border-width: 0 2px 2px 1px; height: 19px; margin-top: -1px; }

.tree { flex: 1; padding: 1px 0 0 4px; white-space: nowrap; overflow: hidden; }
.node { display: flex; align-items: center; height: 17px; gap: 5px; }
.level { margin-left: 7px; border-left: 1px dotted #888; }
.level > .node { margin-left: -5px; gap: 0; }
.level .node .i16 { margin-right: 5px; }
.node button { width: 9px; height: 9px; border: 1px solid #888; background: #f6f6f6; font-size: 9px; line-height: 7px; }
.node i { flex: none; width: 7px; border-top: 1px dotted #888; }
.sub { margin-left: 19px; border-left: 1px dotted #888; }
.sub .node { gap: 0; }
.sub .node i { width: 11px; }

.chart { flex: 1; min-width: 0; position: relative; background: #000; }
.chart > svg { width: 100%; height: 100%; }
.pair { position: absolute; left: 89px; top: 28px; width: 71px; height: 19px; border: 1px solid #c07830; border-radius: 2px; background: #8b0000; color: #f0d890; font-size: 9px; line-height: 17px; }
.chart text { fill: #fff; font: 9px "DejaVu Sans Condensed", "Open Sans", sans-serif; }
.chart .level-text { font: 14px "Liberation Sans", sans-serif; }
.chart .pips { font: 38px "Liberation Sans", sans-serif; fill: #ff0; }

.terminal { flex: none; height: 137px; display: flex; padding: 3px 3px 3px 0; border-top: 1px solid #bbb; border-bottom: 2px solid #c4c4c4; }
.strip { width: 14px; display: flex; flex-direction: column; }
.strip button { height: 12px; font-weight: bold; font-size: 13px; line-height: 10px; }
.strip span { flex: 1; writing-mode: vertical-rl; transform: rotate(180deg); background: linear-gradient(#8fb0d6, #b8d0ea); font-size: 10px; line-height: 14px; margin-right: 1px; padding-top: 3px; }
.termbody { flex: 1; min-width: 0; display: flex; flex-direction: column; background: #fff; border: 1px solid #999; border-width: 1px 0 0 1px; }
.termbody .tabs { margin-top: auto; background: #efefef; height: 21px; }
.orders { width: 100%; table-layout: fixed; border-collapse: collapse; }
.w126 { width: 126px; } .w173 { width: 173px; } .w87 { width: 87px; } .w67 { width: 67px; } .w86 { width: 86px; } .w96 { width: 96px; } .w98 { width: 98px; }
.orders th { height: 18px; padding: 0 5px; font-weight: 400; text-align: right; border-right: 1px solid #ddd; border-bottom: 1px solid #ccc; }
.orders th:first-child, .orders td:first-child { text-align: left; }
.orders th small { margin-left: 6px; font-size: 9px; }
.orders td { height: 18px; padding: 0 2px; text-align: right; border-right: 1px solid #ddd; }
.orders td:last-child, .orders th:last-child { border-right: 0; }
.orders td .i14 { float: left; margin: 1px 4px 0 1px; }
.orders td button { width: 14px; margin: 0 2px 0 6px; color: #888; font-size: 10px; }
.orders .sum td { height: 19px; background: #c8c8c8; font-weight: 600; border: 0; }
.sum b { font-weight: 600; margin-right: 6px; }
.sum .box { float: left; width: 12px; height: 12px; margin: 2px 6px 0 1px; border: 1px solid #777; background: #fff; }
.sum .box svg { width: 10px; height: 10px; }
.sum td:last-child { padding-right: 24px; }
.tabs sub { align-self: flex-end; color: #f02020; font-size: 9px; font-weight: bold; line-height: 10px; margin-left: 1px; }
.termbody .tabs .active { height: 20px; padding: 0 7px; font-weight: 600; }

.status { flex: none; height: 20px; display: flex; align-items: stretch; padding: 1px 3px 1px 2px; }
.status span { border-left: 1px solid #bbb; padding-left: 4px; line-height: 18px; }
.status .grow { flex: 1; border: 0; padding: 0; }
.s109 { width: 109px; } .s96 { width: 97px; } .s67 { width: 67px; } .s64 { width: 64px; }
.status .net { width: 120px; display: flex; align-items: center; gap: 4px; }
.net svg { width: 22px; height: 13px; }

.taskbar { flex: none; height: 38px; display: flex; background: #66cbea; border-top: 1px solid #4a7d90; }
.taskbar > button { width: 58px; display: grid; place-items: center; }
.taskbar .start { width: 48px; }
.taskbar .running { background: #a5e0f2; border: 1px solid #5a8ea0; border-width: 0 1px; }
.tray { margin-left: auto; display: flex; align-items: center; gap: 7px; padding-right: 17px; }
.more { border: 4px solid transparent; border-bottom: 4px solid #111; border-top: 0; margin-right: 4px; }
.lang { padding: 0 8px 0 5px; }
.tray time { text-align: center; line-height: 16px; }
```

FILE: chart.js
```javascript
const NS = 'http://www.w3.org/2000/svg';
const svg = document.getElementById('chart');

function add(tag, attrs, text) {
  const el = document.createElementNS(NS, tag);
  for (const key in attrs) el.setAttribute(key, attrs[key]);
  if (text !== undefined) el.textContent = text;
  svg.appendChild(el);
  return el;
}
const rect = (x, y, width, height, fill, stroke) => add('rect', { x, y, width, height, fill, stroke: stroke || 'none' });
const line = (x1, y1, x2, y2, stroke, dash, w) => add('line', { x1, y1, x2, y2, stroke, 'stroke-dasharray': dash || 'none', 'stroke-width': w || 1 });
const poly = (points, stroke, w) => add('polyline', { points: points.join(' '), fill: 'none', stroke, 'stroke-width': w || 1 });
const label = (x, y, t, cls, fill) => { const el = add('text', { x, y, class: cls || '' }, t); if (fill) el.style.fill = fill; };
const barX = i => Math.round(261 + 30.2 * i) + 0.5;

rect(256, 92, 1034, 438, '#000');
line(256, 93.5, 1288, 93.5, '#777');
line(257.5, 93, 257.5, 529, '#666');
line(1288.5, 93, 1288.5, 529, '#777');
line(256, 529, 1290, 529, '#999', '', 2);

/* period separator and pivot levels */
line(775, 97, 775, 408, '#e8e8e8', '3 3', 1.5);
[[144, '#b00000', '3 3', 1.5], [221.5, '#ff0', '3 2', 1], [330.5, '#0000d0', '3 3', 1.3]].forEach(r => line(261, r[0], 711, r[0], r[1], r[2], r[3]));
[[145.5, '#c00000'], [187.5, '#f00000'], [250.5, '#e8e800'], [292.5, '#1e80e0'], [355.5, '#1e90ff'], [396.5, '#1e80e0']].forEach(r => line(775, r[0], 1243, r[0], r[1], '3 3'));
line(261, 277, 1244, 277, '#00a800', '10 5 3 5', 1.5);
label(267, 275, '#274142746 sell 0.01');

/* candles: high, top, bottom, low */
const candles = [
  [250, 254, 257, 259], [255, 257, 265, 272], [263, 265, 297, 297], [279, 292, 296, 314], [256, 262, 293, 303],
  [249, 252, 263, 269], [215, 241, 252, 258], [225, 233, 241, 258], [210, 223, 232, 237], [216, 223, 239, 258],
  [212, 235, 239, 245], [234, 235, 262, 266], [251, 262, 275, 277], [264, 264, 275, 283], [258, 261, 264, 273],
  [250, 251, 262, 269], [209, 228, 251, 257], [199, 205, 214, 225], [208, 214, 235, 239], [217, 221, 235, 241],
  [208, 211, 221, 233], [195, 211, 216, 219], [210, 217, 233, 241], [230, 233, 243, 258], [230, 243, 246, 253],
  [229, 235, 245, 246], [230, 235, 277, 282], [271, 274, 276, 277]
];
candles.forEach((c, i) => {
  const x = barX(i);
  const left = i === 0 ? x : x - 12;
  line(x, c[0], x, c[3], '#707070');
  rect(left, c[1] + 0.5, x + 11 - left, c[2] - c[1], '#000', '#707070');
});

poly([261,155, 306,160, 359,163, 399,165, 443,168, 503,170, 539,172, 603,175, 670,179, 720,182, 775,182.5, 807,184, 853,185, 920,186, 947,188, 983,189, 1040,191, 1077,193], '#f4f400');
poly([261,251, 289,253, 303,256, 323,262, 353,267, 389,266, 413,263, 446,259, 473,255, 503,249, 539,247, 563,246, 576,247, 604,250, 627,254, 653,255, 680,256, 717,255, 743,251, 770,245, 800,244, 820,241, 847,237, 877,233, 900,231, 933,232, 948,233, 1003,235, 1020,235, 1047,243, 1077,248], '#0000ff');
poly([261,214, 293,216, 316,221, 339,224, 359,226, 383,228, 443,230, 543,230, 576,231, 604,233, 623,235, 650,236, 680,238, 750,238, 767,236, 800,236, 827,235, 877,234, 948,233, 987,234, 1020,235, 1040,237, 1077,239], '#ff0000');

const arrow = (x, y, dir, fill) => add('path', { d: `M${x} ${y}l-6 ${6 * dir}v${2 * dir}l4 ${-2 * dir}v${6 * dir}h4v${-6 * dir}l4 ${2 * dir}v${-2 * dir}z`, fill });
[[411, 279], [744, 264], [1016, 253]].forEach(a => arrow(a[0], a[1], 1, '#0000ff'));
[[624, 243], [956, 221], [1047, 221]].forEach(a => arrow(a[0], a[1], -1, '#ff0000'));
add('path', { d: 'M1074 273l4 4-4 4-4-4z', fill: '#f00', stroke: '#fff' });

/* level captions */
label(1161, 380, '-2.8', 'pips');
label(1178, 400, '0.0', 'level-text', '#ff0');
[[158, 'R2 110.871', '#e00000'], [200, 'R1 110.623', '#e00000'], [263, 'PP 110.248', '#e8e800'], [305, 'S1 110.000', '#0000d8'], [368, 'S2 109.625', '#0000d8'], [409, 'S3 109.377', '#0000d8']].forEach(r => label(1132, r[0], r[1], 'level-text', r[2]));

/* window frames */
rect(256, 408, 1032, 3, '#000');
[[96, 408], [410, 431], [434, 510]].forEach(f => rect(260.5, f[0] + 0.5, 985, f[1] - f[0], 'none', '#ddd'));
add('path', { d: 'M263 102h7l-3.500 3.500z', fill: '#fff' });
label(275, 107, 'CHFJPY,H1');
label(1056, 108, 'A-CCI_Multi_Pair_Trading v1.0 2 (working)');
add('circle', { cx: 1235, cy: 105, r: 5, fill: '#000', stroke: '#fff' });
add('path', { d: 'M1233 103v1M1237 103v1M1232 106q3 3 6 0', fill: 'none', stroke: '#fff' });

/* pips histogram */
for (let i = 0; i < 28; i++) {
  const x = barX(i) - 3.5;
  const start = i === 0 ? 261 : x;
  rect(start, 411, x + 6 - start, 20, '#f00');
  if ([17, 20, 21, 22].includes(i)) rect(x, 411, 6, 10, '#00f');
}
label(265, 422, 'Pips29 (240,240,60,60) 3.0000 2.0000 1.0000 0.0000');

/* CCI */
const slow = [481, 481.5, 484.5, 485, 480.5, 477, 473, 473, 470, 472, 470.5, 475, 477, 477.5, 476, 474, 467, 464, 465, 465, 463, 460, 465, 469, 468.5, 466, 477, 480.5];
const fast = [470, 480, 506, 502, 478, 460, 445, 446, 438, 450.5, 448.5, 464, 473, 474, 469, 464, 451, 443, 454, 455, 451, 448.5, 459, 468, 467.5, 465, 482, 488];
poly(fast.flatMap((y, i) => [barX(i), y]), '#d00000');
poly(slow.flatMap((y, i) => [barX(i), y]), '#0000ff', 2);
line(261, 464.5, 1077, 464.5, '#fff', '', 2);
slow.forEach((y, i) => { if (i) line(barX(i), 464, barX(i), y, '#ddd', '', 1.5); });
line(775, 412, 775, 431, '#e8e8e8', '3 3', 1.5);
line(775, 435, 775, 510, '#e8e8e8', '3 3', 1.5);
label(265, 446, 'DRBobCCI -146.1441 -96.8582 -96.8582 0.0000');

/* axes */
[[125, '110.995'], [156, '110.810'], [187, '110.625'], [218, '110.435'], [249, '110.250'], [281, '110.065'], [312, '109.880'], [343, '109.695'], [374, '109.510'], [405, '109.325']].forEach(r => {
  line(1246, r[0] + 0.5, 1248, r[0] + 0.5, '#ddd');
  label(1250, r[0] + 4, r[1]);
});
rect(1247, 269, 39, 11, '#fff');
label(1250, 278, '110.106', '', '#000');
[[420, '3.5'], [429, '-0.5'], [431, '0.00'], [444, '190.5039'], [468, '0.00'], [507, '-280.6493']].forEach(r => label(1248, r[0], r[1]));
['24 Apr 2020', '24 Apr 09:00', '24 Apr 11:00', '24 Apr 13:00', '24 Apr 15:00', '24 Apr 17:00', '24 Apr 19:00', '24 Apr 21:00', '24 Apr 23:00', '27 Apr 01:00', '27 Apr 03:00', '27 Apr 05:00', '27 Apr 07:00', '27 Apr 09:00'].forEach((t, i) => {
  const x = barX(i * 2);
  line(x, 510, x, 513, '#ddd');
  label(x - 1.5, 522, t);
});
```
